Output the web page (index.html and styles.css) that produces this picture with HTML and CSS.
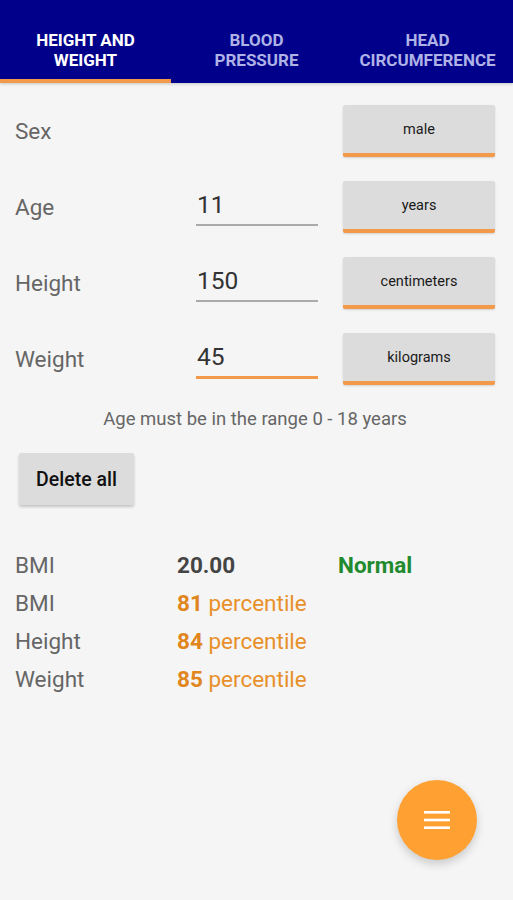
FILE: index.html
```html
<!DOCTYPE html>
<html lang="en">
<head>
<meta charset="UTF-8">
<meta name="viewport" content="width=device-width, initial-scale=1.0">
<title>Growth Calculator</title>
<link rel="stylesheet" href="styles.css">
</head>
<body>

<header class="tabs">
    <div class="tab active">HEIGHT AND<br>WEIGHT</div>
    <div class="tab">BLOOD<br>PRESSURE</div>
    <div class="tab">HEAD<br>CIRCUMFERENCE</div>
</header>

<main class="content">
    <div class="form">
        <div class="row">
            <span class="label">Sex</span>
            <span></span>
            <button class="unit">male</button>
        </div>
        <div class="row">
            <span class="label">Age</span>
            <div class="field">11</div>
            <button class="unit">years</button>
        </div>
        <div class="row">
            <span class="label">Height</span>
            <div class="field">150</div>
            <button class="unit">centimeters</button>
        </div>
        <div class="row">
            <span class="label">Weight</span>
            <div class="field focused">45</div>
            <button class="unit">kilograms</button>
        </div>
    </div>

    <p class="hint">Age must be in the range 0 - 18 years</p>

    <button class="delete-btn">Delete all</button>

    <div class="results">
        <span class="label">BMI</span>
        <span class="value">20.00</span>
        <span class="status">Normal</span>

        <span class="label">BMI</span>
        <span class="pct"><b>81</b> percentile</span>
        <span></span>

        <span class="label">Height</span>
        <span class="pct"><b>84</b> percentile</span>
        <span></span>

        <span class="label">Weight</span>
        <span class="pct"><b>85</b> percentile</span>
        <span></span>
    </div>
</main>

<button class="fab" aria-label="Menu">
    <svg width="28" height="20" viewBox="0 0 28 20">
        <rect x="1" y="1" width="26" height="2.6" fill="#fff"/>
        <rect x="1" y="8.7" width="26" height="2.6" fill="#fff"/>
        <rect x="1" y="16.4" width="26" height="2.6" fill="#fff"/>
    </svg>
</button>

</body>
</html>
```

FILE: styles.css
```css
body {
    font-family: Roboto, 'Noto Sans', sans-serif;
    margin: 0;
    padding: 0;
    background-color: #f5f5f5;
    color: #666;
}

/* タブ */
.tabs {
    display: grid;
    grid-template-columns: repeat(3, 1fr);
    height: 83px;
    background-color: #00008a;
    box-shadow: 0 1px 3px rgba(0, 0, 0, 0.2);
}

.tab {
    display: flex;
    align-items: center;
    justify-content: center;
    text-align: center;
    font-size: 17px;
    font-weight: 700;
    line-height: 20px;
    color: #aeb2e6;
    padding-top: 20px;
    box-sizing: border-box;
    border-bottom: 4px solid transparent;
}

.tab.active {
    color: #fff;
    border-bottom-color: #f2994a;
}

/* 入力フォーム */
.content {
    padding: 22px 18px 0 15px;
}

.form {
    display: flex;
    flex-direction: column;
    gap: 24px;
}

.row {
    display: grid;
    grid-template-columns: 156px 122px 1fr;
    column-gap: 25px;
    align-items: center;
    height: 52px;
}

.label {
    font-size: 22.5px;
    color: #666;
}

.field {
    font-size: 24.5px;
    color: #333;
    height: 36px;
    line-height: 34px;
    border-bottom: 2px solid #aaa;
    padding-left: 1px;
}

.field.focused {
    border-bottom: 3px solid #f2994a;
}

.unit {
    height: 52px;
    border: none;
    border-bottom: 4px solid #f2994a;
    border-radius: 2px;
    background-color: #dcdcdc;
    font-family: inherit;
    font-size: 14.5px;
    font-weight: 400;
    color: #1a1a1a;
    box-shadow: 0 1px 2px rgba(0, 0, 0, 0.15);
}

.hint {
    text-align: center;
    font-size: 18.5px;
    line-height: 24px;
    color: #666;
    margin: 22px 0 22px 0;
}

.delete-btn {
    margin-left: 4px;
    width: 115px;
    height: 52px;
    border: none;
    border-radius: 2px;
    background-color: #dcdcdc;
    font-family: inherit;
    font-size: 19.5px;
    font-weight: 500;
    color: #111;
    box-shadow: 0 2px 3px rgba(0, 0, 0, 0.2);
}

/* 結果 */
.results {
    display: grid;
    grid-template-columns: 162px 161px 1fr;
    grid-auto-rows: 38px;
    align-items: center;
    margin-top: 41px;
    font-size: 22.5px;
}

.results .label {
    font-size: 22.5px;
}

.value {
    font-weight: 700;
    color: #444;
}

.status {
    font-weight: 700;
    color: #1f8a2e;
}

.pct {
    color: #e8902a;
}

.pct b {
    font-weight: 700;
    color: #e0861c;
}

/* フローティングボタン */
.fab {
    position: fixed;
    right: 36px;
    bottom: 40px;
    width: 80px;
    height: 80px;
    border: none;
    border-radius: 50%;
    background-color: #ffa033;
    box-shadow: 0 4px 10px rgba(0, 0, 0, 0.18);
    display: flex;
    align-items: center;
    justify-content: center;
    padding: 0;
}
```
